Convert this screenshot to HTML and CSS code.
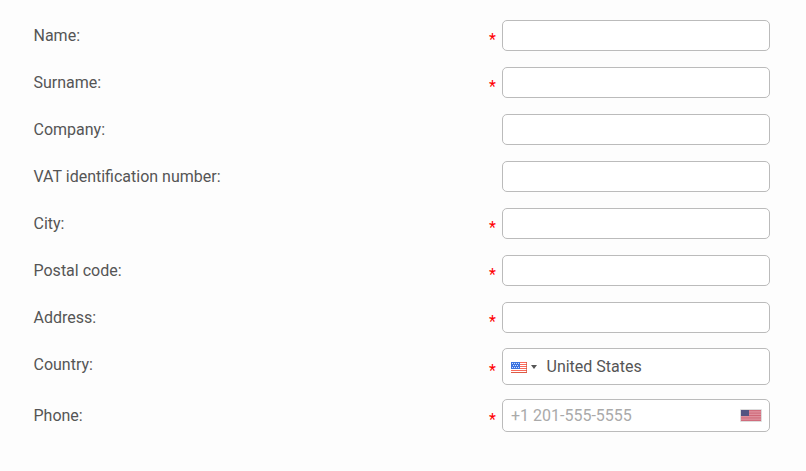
FILE: index.html
```html
<!DOCTYPE html>
<html lang="en">
<head>
<meta charset="utf-8">
<title>Contact details</title>
<link rel="stylesheet" href="styles.css">
</head>
<body>
<form class="form">
  <div class="row"><label for="name">Name:</label><span class="req">*</span><input id="name" class="field"></div>
  <div class="row"><label for="surname">Surname:</label><span class="req">*</span><input id="surname" class="field"></div>
  <div class="row"><label for="company">Company:</label><input id="company" class="field"></div>
  <div class="row"><label for="vat">VAT identification number:</label><input id="vat" class="field"></div>
  <div class="row"><label for="city">City:</label><span class="req">*</span><input id="city" class="field"></div>
  <div class="row"><label for="postal">Postal code:</label><span class="req">*</span><input id="postal" class="field"></div>
  <div class="row"><label for="address">Address:</label><span class="req">*</span><input id="address" class="field"></div>
  <div class="row country"><label>Country:</label><span class="req">*</span>
    <div class="field select">
      <svg class="flag" width="16" height="11" viewBox="0 0 16 11" shape-rendering="crispEdges">
        <path fill="#fff" d="M0 0h16v11H0z"/>
        <path fill="#fb6a5c" d="M0 0h16v1H0zM0 2h16v1H0zM0 4h16v1H0zM0 6h16v1H0zM0 8h16v1H0zM0 10h16v1H0z"/>
        <path fill="#3b73e0" d="M0 0h9v7H0z"/>
        <path fill="#cfe0ff" d="M1 1h1v1H1zM3 1h1v1H3zM5 1h1v1H5zM7 1h1v1H7zM2 3h1v1H2zM4 3h1v1H4zM6 3h1v1H6zM1 5h1v1H1zM3 5h1v1H3zM5 5h1v1H5zM7 5h1v1H7z"/>
        <path fill="#d0563c" fill-opacity=".7" d="M15 0h1v11h-1zM0 10h15v1H0z"/>
      </svg>
      <span class="caret"></span><span class="value">United States</span>
    </div>
  </div>
  <div class="row phone"><label>Phone:</label><span class="req">*</span>
    <div class="field tel"><span class="placeholder">+1 201-555-5555</span>
      <svg class="us" width="22" height="13" viewBox="0 0 22 13" fill="none">
        <path fill="#e5a3ad" d="M1 1h20v11H1z"/>
        <path stroke="#cc6070" stroke-width=".9" d="M1 1.4h20M1 3.1h20M1 4.8h20M1 6.5h20M1 8.2h20M1 9.9h20M1 11.6h20"/>
        <path fill="#535481" d="M1 1h8v6H1z"/>
        <path stroke="#ddd" d="M.5.5h21v12H.5z"/>
      </svg>
    </div>
  </div>
</form>
</body>
</html>
```

FILE: styles.css
```css
* { box-sizing: border-box; }
body { margin: 0; background: #fdfdfd; color: #555; font: 16px/20px Roboto, sans-serif; }
.form { padding: 20px 36px 0 33.5px; }
.row { display: flex; height: 31px; margin-bottom: 16px; align-items: flex-start; }
label { flex: 1; padding-top: 6px; }
.req { color: #f00; font-size: 16px; line-height: 20px; padding-top: 10px; margin-right: 6px; }
.field { width: 268px; height: 31px; border: 1px solid #bbb; border-radius: 5px; background: #fff; padding: 0 8px; font: inherit; }
.country { height: 37px; margin-top: -1px; margin-bottom: 14px; }
.country .field { height: 37px; }
.country label { padding-top: 7px; }
.country .req { padding-top: 13px; }
.phone, .phone .field { height: 33px; }
.phone label { padding-top: 7px; }
.phone .req { padding-top: 11px; }
.select, .tel { display: flex; align-items: center; }
.flag { position: relative; top: 1px; }
.caret { margin: 0 9.5px 0 4px; border: 3.5px solid transparent; border-top: 4px solid #555; border-bottom: 0; }
.tel { justify-content: space-between; }
.us { margin-right: -1px; }
.placeholder { color: #aaa; }
```
